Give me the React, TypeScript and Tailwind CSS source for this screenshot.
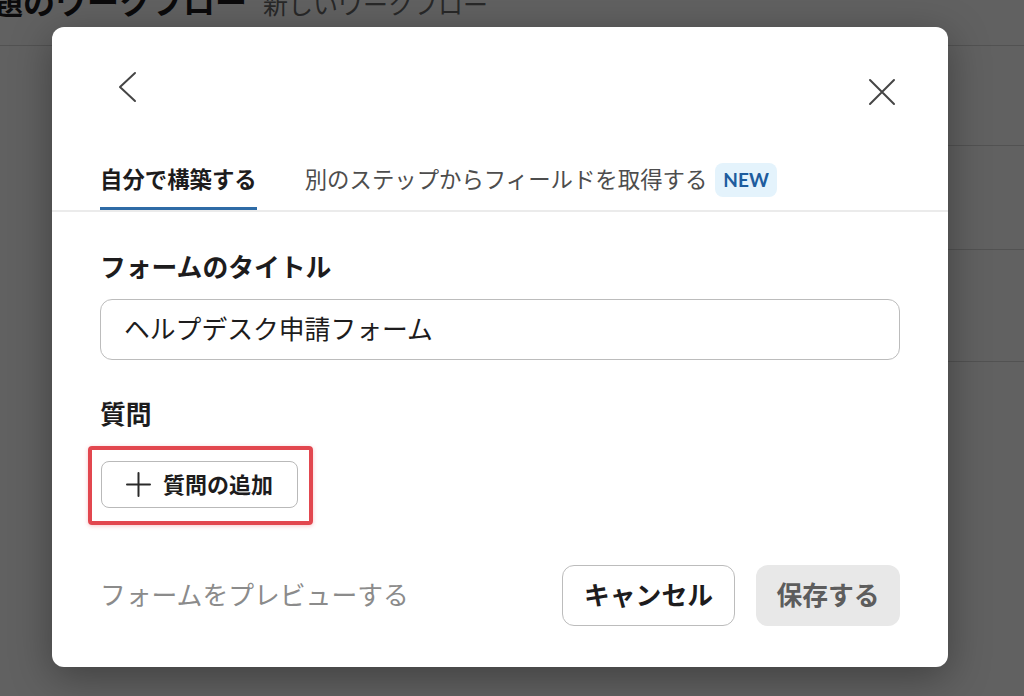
export default function App() {
  return (
    <div className="relative w-[1024px] h-[696px] overflow-hidden bg-white font-[Lato,'Noto_Sans_CJK_JP',sans-serif] text-[#1d1c1d]">
      {/* background page */}
      <header className="h-[46px] border-b border-[#d8d8d8] flex items-start">
        <div className="flex items-baseline gap-[16px] -ml-[41px] -mt-[14px]">
          <span className="text-[32px] font-bold leading-[32px] whitespace-nowrap">課題のワークフロー</span>
          <span className="text-[25px] leading-[32px] text-[#6a6a6a] whitespace-nowrap">新しいワークフロー</span>
        </div>
      </header>
      <div className="ml-[200px] flex flex-col">
        <div className="h-[100px] border-b border-[#d8d8d8]" />
        <div className="h-[104px] border-b border-[#d8d8d8]" />
        <div className="h-[112px] border-b border-[#d8d8d8]" />
      </div>

      {/* overlay */}
      <div className="absolute inset-0 bg-black/[0.62]" />

      {/* modal */}
      <div className="absolute left-[52px] top-[27px] w-[896px] h-[640px] bg-white rounded-[12px] shadow-[0_10px_40px_rgba(0,0,0,0.35)] flex flex-col">
        <div className="h-[123px] flex justify-between items-start pl-[59px] pr-[50px] pt-[44px]">
          <svg width="32" height="32" viewBox="0 0 32 32" fill="none">
            <path d="M24 2 L9 16 L24 30" stroke="#454545" strokeWidth="2" strokeLinecap="round" strokeLinejoin="round" />
          </svg>
          <svg width="32" height="32" viewBox="0 0 32 32" fill="none" className="mt-[5px]">
            <path d="M4 4 L28 28 M28 4 L4 28" stroke="#454545" strokeWidth="2" strokeLinecap="round" />
          </svg>
        </div>

        <div className="h-[62px] border-b-2 border-[#ebebeb] flex items-end gap-[48px] px-[48px]">
          <div className="h-[60px] flex items-center pt-[3px] border-b-[3px] border-[#2e6ba6]">
            <span className="text-[22.4px] font-bold leading-[30px] whitespace-nowrap">自分で構築する</span>
          </div>
          <div className="h-[60px] flex items-center pt-[3px] border-b-[3px] border-transparent gap-[8px]">
            <span className="text-[22.4px] leading-[30px] text-[#4d4d4d] whitespace-nowrap">別のステップからフィールドを取得する</span>
            <span className="h-[34px] px-[8px] rounded-[8px] bg-[#e4f3fc] text-[#1d5c9e] font-bold text-[19px] flex items-center">NEW</span>
          </div>
        </div>

        <div className="flex flex-col px-[48px]">
          <div className="mt-[37px] text-[25.8px] font-bold leading-[36px]">フォームのタイトル</div>
          <div className="mt-[14px] h-[61px] rounded-[12px] border-[1.5px] border-[#bcbcbc] flex items-center pl-[23px] text-[25.8px]">
            ヘルプデスク申請フォーム
          </div>
          <div className="mt-[36px] text-[25.8px] font-bold leading-[36px]">質問</div>
          <div className="mt-[14px] -ml-[12px] self-start border-[4px] border-[#e2474f] rounded-[4px] pt-[11px] pl-[9px] pr-[11px] pb-[13px] shadow-[0_1px_4px_rgba(226,71,79,0.3)]">
            <div className="w-[197px] h-[47px] rounded-[8px] border-[1.5px] border-[#b9b9b9] flex items-center pl-[24px] gap-[12px]">
              <svg width="25" height="25" viewBox="0 0 25 25" fill="none">
                <path d="M12.5 1 V24 M1 12.5 H24" stroke="#2a2a2a" strokeWidth="2" strokeLinecap="round" />
              </svg>
              <span className="text-[22px] font-bold leading-[30px] whitespace-nowrap">質問の追加</span>
            </div>
          </div>

          <div className="mt-[40px] flex items-center justify-between">
            <span className="text-[25.8px] text-[#8b8b8b] whitespace-nowrap">フォームをプレビューする</span>
            <div className="flex items-center gap-[21px]">
              <div className="w-[173px] h-[61px] rounded-[12px] border-[1.5px] border-[#bcbcbc] flex items-center justify-center font-bold text-[25.8px]">
                キャンセル
              </div>
              <div className="w-[144px] h-[61px] rounded-[12px] bg-[#e8e8e8] text-[#5d5d5d] flex items-center justify-center font-bold text-[25.8px]">
                保存する
              </div>
            </div>
          </div>
        </div>
      </div>
    </div>
  );
}
